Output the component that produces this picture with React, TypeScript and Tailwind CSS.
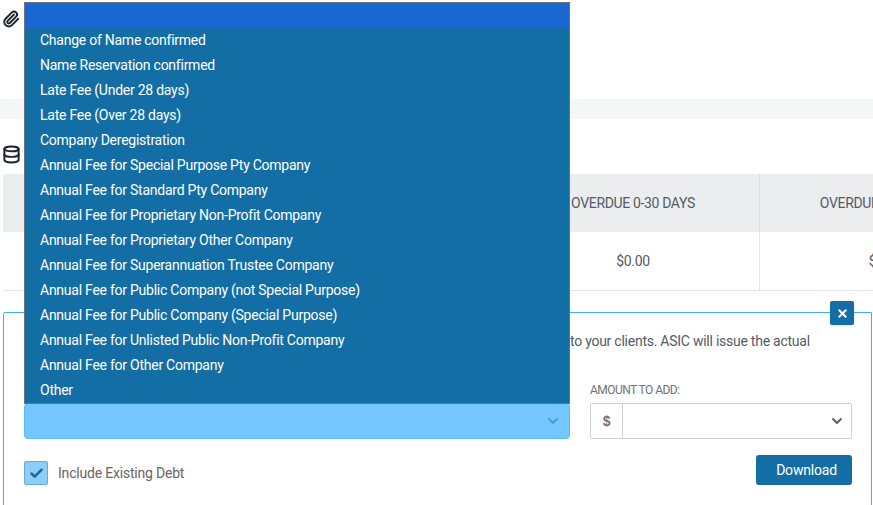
import { Check, ChevronDown, Database, Paperclip, X } from "lucide-react";

const options = [
  "",
  "Change of Name confirmed",
  "Name Reservation confirmed",
  "Late Fee (Under 28 days)",
  "Late Fee (Over 28 days)",
  "Company Deregistration",
  "Annual Fee for Special Purpose Pty Company",
  "Annual Fee for Standard Pty Company",
  "Annual Fee for Proprietary Non-Profit Company",
  "Annual Fee for Proprietary Other Company",
  "Annual Fee for Superannuation Trustee Company",
  "Annual Fee for Public Company (not Special Purpose)",
  "Annual Fee for Public Company (Special Purpose)",
  "Annual Fee for Unlisted Public Non-Profit Company",
  "Annual Fee for Other Company",
  "Other",
];

export default function App() {
  return (
    <div className="relative h-[505px] overflow-hidden bg-white font-['Roboto',sans-serif] text-[14px] tracking-[-0.2px] text-[#555b66]">
      {/* Attachments */}
      <div className="h-[99px] pl-[2px] pt-[10px]">
        <Paperclip size={18} strokeWidth={2.6} className="text-[#20242c]" />
      </div>
      <div className="h-[20px] bg-[#f5f6f7]" />

      {/* Debt table */}
      <div className="flex h-[55px] items-start pl-[2px] pt-[26px]">
        <Database size={19} strokeWidth={2.5} className="text-[#20242c]" />
      </div>
      <div className="ml-[3px] overflow-hidden">
        <div className="grid w-[1008px] grid-cols-4 border-b border-[#e2e4e7] tracking-[-0.35px]">
          <div className="h-[58px] rounded-tl-[4px] bg-[#ecedef]" />
          <div className="h-[58px] bg-[#ecedef]" />
          <div className="flex h-[58px] items-center justify-center bg-[#ecedef]">OVERDUE 0-30 DAYS</div>
          <div className="flex h-[58px] items-center justify-center border-l border-[#dcdee1] bg-[#ecedef]">OVERDUE 30-60 DAYS</div>
          <div className="h-[58px]" />
          <div className="h-[58px]" />
          <div className="flex h-[58px] items-center justify-center">$0.00</div>
          <div className="flex h-[58px] items-center justify-center border-l border-[#e2e4e7]">$0.00</div>
        </div>
      </div>

      {/* Invoice panel */}
      <div className="relative ml-[3px] mt-[21px] h-[300px] w-[869px] rounded-tl-[2px] border border-[#3bb0f5] pl-[20px] pr-[19px]">
        <button className="absolute right-[17px] top-[-12px] flex h-[24px] w-[24px] items-center justify-center rounded-[2px] bg-[#146ea6] text-white shadow-sm">
          <X size={13} strokeWidth={3.5} />
        </button>
        <p className="h-[67px] pl-[546px] pt-[19px] leading-[18px] tracking-[-0.25px]">to your clients. ASIC will issue the actual</p>
        <div className="flex gap-[20px]">
          <div className="h-[36px] w-[546px] shrink-0 self-end">
            <div className="flex h-[36px] items-center justify-end rounded-[4px] border border-[#5cbcfb] bg-[#73c6ff] pr-[8px] text-[#3f9fe6]">
              <ChevronDown size={16} strokeWidth={3} />
            </div>
          </div>
          <div className="flex-1">
            <div className="mb-[3px] pt-[1px] text-[12px] uppercase leading-[19px] tracking-[-0.55px] text-[#6d727c]">Amount to add:</div>
            <div className="flex h-[36px] items-center rounded-[2px] border border-[#cfd1d6]">
              <div className="flex h-[36px] w-[32px] items-center justify-center border-r border-[#cfd1d6] font-['Liberation_Sans',sans-serif] text-[14px] font-bold text-[#6d727c]">
                $
              </div>
              <div className="flex flex-1 justify-end pr-[6px] text-[#5d6270]">
                <ChevronDown size={16} strokeWidth={3} />
              </div>
            </div>
          </div>
        </div>
        <div className="mt-[16px] flex items-start justify-between">
          <label className="mt-[6px] flex items-center gap-[10px]">
            <span className="flex h-[24px] w-[24px] items-center justify-center rounded-[2px] border border-[#5baee8] bg-[#8fcdf5] text-[#146ea6]">
              <Check size={15} strokeWidth={4} />
            </span>
            <span className="text-[#6b6460]">Include Existing Debt</span>
          </label>
          <button className="h-[30px] w-[96px] rounded-[3px] bg-[#146ea6] pl-[5px] text-white">Download</button>
        </div>
      </div>

      {/* Open select list */}
      <ul className="absolute left-[24px] top-[2px] w-[546px] border border-[#6d7378] bg-[#146ea6] tracking-[-0.25px] text-white">
        {options.map((option, i) => (
          <li key={i} className={i === 0 ? "h-[25px] bg-[#1a66d2] pl-[15px] leading-[25px]" : "h-[25px] pl-[15px] leading-[25px]"}>
            {option}
          </li>
        ))}
      </ul>
    </div>
  );
}
